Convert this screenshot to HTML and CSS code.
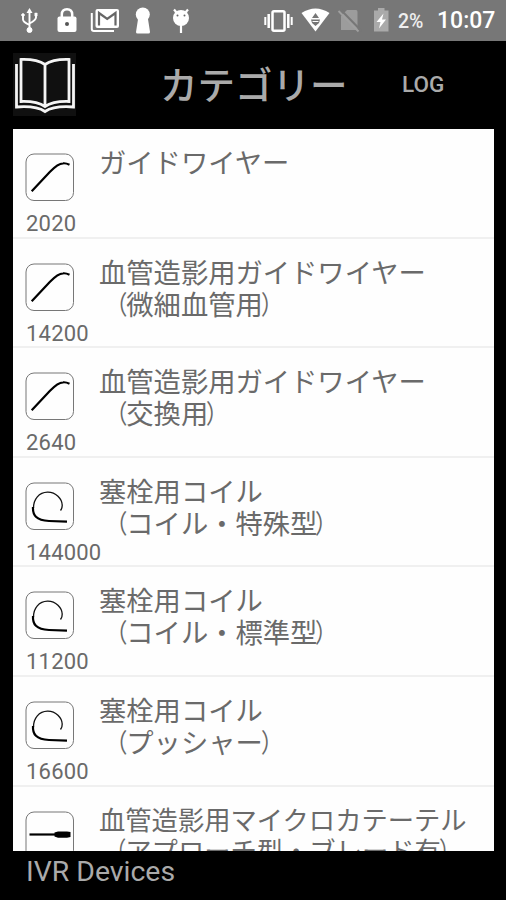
FILE: index.html
```html
<!DOCTYPE html>
<html lang="ja">
<head>
<meta charset="utf-8">
<title>IVR Devices</title>
<link rel="stylesheet" href="styles.css">
</head>
<body>
<svg class="defs" aria-hidden="true">
  <symbol id="wire" viewBox="0 0 50 50">
    <rect class="frame" x="1" y="1" width="47.5" height="46.5" rx="8"/>
    <path class="wire" d="M6.700 38.300 25 18.700Q33 10.500 38 10.300Q41 10 44.500 11.700"/>
  </symbol>
  <symbol id="coil" viewBox="0 0 50 50">
    <rect class="frame" x="1" y="1" width="47.5" height="46.5" rx="8"/>
    <path class="loop" d="M8.500 26C8.500 17 14 10.500 22.500 10.200C31 10 37 17 37.200 23Q37.400 26 35.500 28.500"/>
    <path class="wire" d="M8 25C7.500 33 11 38.500 24 39L42 39.700"/>
  </symbol>
  <symbol id="catheter" viewBox="0 0 50 50">
    <rect class="frame" x="1" y="1" width="47.5" height="46.5" rx="8"/>
    <path class="wire" d="M4.500 23.500H31"/>
    <path d="M29.500 21.500 33 20.500H42L45.500 21V26L42 26.800H33L29.500 25.500Z"/>
  </symbol>
</svg>
<header class="status">
  <svg width="46" height="41" viewBox="0 0 46 41" fill="#fff" stroke="#fff"><path d="M29.500 12V30M23 15V19.500Q23 22 29.500 25M36 15V17.500Q36 20 29.500 23.500" fill="none" stroke-width="1.900"/><path d="M29.500 8 32.500 13H26.500Z" stroke="none"/><circle cx="29.500" cy="30" r="2.500"/><circle cx="23" cy="15" r="1.300"/><path d="M34.800 13H37.200V16H34.800Z" stroke-width=".5"/></svg>
  <svg width="38" height="41" viewBox="46 0 38 41"><path d="M61.800 18V14.500Q61.800 9.200 67 9.200T72.200 14.500V18" fill="none" stroke="#fff" stroke-width="2.500"/><rect x="57.500" y="16.500" width="19" height="15.500" rx="2" fill="#fff"/><circle cx="67" cy="24" r="2" fill="#555"/></svg>
  <svg width="42" height="41" viewBox="84 0 42 41" fill="none"><path d="M91.800 13V29Q91.800 31 94 31H114" stroke="#fff" stroke-width="2"/><rect x="95.500" y="9" width="23.500" height="19" rx="2" fill="#fff"/><path d="M99 25.500V13L107.200 19 115.500 13V25.500" stroke="#666" stroke-width="2.200"/></svg>
  <svg width="36" height="41" viewBox="126 0 36 41" fill="#fff"><circle cx="142.800" cy="14.500" r="7"/><path d="M138.500 16H147.500L150 32Q150 33.500 148.500 33.500H137.500Q136 33.500 136 32Z"/></svg>
  <svg width="94" height="41" viewBox="162 0 94 41" fill="#fff"><circle cx="181" cy="18" r="8"/><path d="M174 9.500 177 13M188 9.500 185 13M181 25V33" stroke="#fff" stroke-width="2.200"/><circle cx="177.500" cy="15.500" r="1" fill="#666"/><circle cx="184.500" cy="15.500" r="1" fill="#666"/></svg>
  <svg width="42" height="41" viewBox="256 0 42 41" fill="none" stroke="#fff"><rect x="272.500" y="11.200" width="12" height="19.500" rx="1.500" stroke-width="2.500"/><path d="M268.700 14V28M288.300 14V28" stroke-width="2.500"/><path d="M265.300 17V25M291.700 17V25" stroke-width="2"/></svg>
  <svg width="36" height="41" viewBox="298 0 36 41"><path d="M301.500 13Q315.500 4 329.500 13L315.500 31.500Z" fill="#fff"/><path d="M315.500 13 319 18H312ZM311 19.500H320L319 23 315.500 26 312 23Z" fill="#777"/><path d="M312.500 21.500H318.500" stroke="#fff"/></svg>
  <svg width="32" height="41" viewBox="334 0 32 41"><path d="M347 10H356Q357.500 10 357.500 12V30H341V16Z" fill="#9c9c9c"/><path d="M341 10 361.500 31" stroke="#777" stroke-width="2"/><path d="M338.500 11 358.500 31.500" stroke="#a0a0a0" stroke-width="1.800"/></svg>
  <svg width="28" height="41" viewBox="366 0 28 41"><path d="M374 10.500H378V8H384.500V10.500H388.500V31.500H374Z" fill="#aaa"/><path d="M383.500 13.500 376.500 22H380.500L379 28.500 386 19.500H382Z" fill="#fff"/></svg>
  <span class="percent">2%</span><span class="clock">10:07</span>
</header>
<div class="bar">
  <svg class="book" viewBox="0 0 63 63"><path d="M8 6.500Q24 6 32 11.500Q40 6 56 6.500V48.500Q40 48 32 53.500Q24 48 8 48.500ZM32 11.500V53"/><path d="M3.500 11V54Q23 52.500 32 58.500Q41 52.500 60.500 54V11" /></svg>
  <h1>カテゴリー</h1>
  <span class="log">LOG</span>
</div>
<main class="list">
  <section class="row"><div class="side"><svg><use href="#wire"/></svg><span>2020</span></div><p>ガイドワイヤー</p></section>
  <section class="row"><div class="side"><svg><use href="#wire"/></svg><span>14200</span></div><p>血管造影用ガイドワイヤー<br><i class="open">（</i>微細血管用<i class="close">）</i></p></section>
  <section class="row"><div class="side"><svg><use href="#wire"/></svg><span>2640</span></div><p>血管造影用ガイドワイヤー<br><i class="open">（</i>交換用<i class="close">）</i></p></section>
  <section class="row"><div class="side"><svg><use href="#coil"/></svg><span>144000</span></div><p>塞栓用コイル<br><i class="open">（</i>コイル・特殊型<i class="close">）</i></p></section>
  <section class="row"><div class="side"><svg><use href="#coil"/></svg><span>11200</span></div><p>塞栓用コイル<br><i class="open">（</i>コイル・標準型<i class="close">）</i></p></section>
  <section class="row"><div class="side"><svg><use href="#coil"/></svg><span>16600</span></div><p>塞栓用コイル<br><i class="open">（</i>プッシャー<i class="close">）</i></p></section>
  <section class="row"><div class="side"><svg><use href="#catheter"/></svg></div><p class="fit">血管造影用マイクロカテーテル<br><i class="open">（</i>アプローチ型・ブレード有<i class="close">）</i></p></section>
</main>
<footer>IVR Devices</footer>
</body>
</html>
```
FILE: styles.css
```css
* { box-sizing: border-box; }
body {
  margin: 0;
  height: 900px;
  display: flex;
  flex-direction: column;
  overflow: hidden;
  background: #000;
  font-family: Roboto, "Noto Sans CJK JP", sans-serif;
}
.defs { position: absolute; width: 0; height: 0; }
.status {
  display: flex;
  flex: none;
  height: 41px;
  background: #777;
  color: #fff;
  line-height: 41px;
  white-space: nowrap;
}
.status svg { flex: none; }
.percent { width: 43px; padding-left: 4px; font-size: 19.5px; font-weight: 500; line-height: 43px; color: #eee; }
.clock { font-size: 23px; font-weight: 500; line-height: 42px; }
.bar {
  flex: none;
  display: flex;
  height: 88px;
  color: #aaa;
}
.book {
  width: 63px;
  height: 63px;
  margin: 12px 0 0 13px;
  background: #101010;
  fill: none;
  stroke: #f4f4f4;
  stroke-width: 2.8;
}
h1 {
  width: 242px;
  margin: 0 0 0 84px;
  font-size: 37.5px;
  font-weight: 500;
  line-height: 91px;
}
.log { font-size: 22.5px; font-weight: 500; line-height: 87px; }
.list {
  flex: none;
  height: 722px;
  margin: 0 12px 0 13px;
  overflow: hidden;
  background: #fefefe;
  color: #6a6a6a;
}
.row {
  display: flex;
  height: 109.6px;
  border-bottom: 2px solid #f0f0f0;
}
.side { width: 86px; padding: 24px 0 0 12px; }
.side svg { display: block; width: 50px; height: 50px; }
.side span {
  display: block;
  margin-left: 1px;
  font-size: 22px;
  line-height: 24px;
  letter-spacing: .2px;
  padding-top: 9px;
}
.row p {
  margin: 16px 0 0;
  font-size: 27.3px;
  line-height: 32px;
  white-space: nowrap;
  font-family: "Noto Sans CJK JP", sans-serif;
}
.row .fit { font-size: 26.3px; line-height: 31px; }
.row i { display: inline-block; font-style: normal; line-height: 1; }
.open { transform: translateX(1px) scale(.8, .95); transform-origin: 100% 50%; }
.close { transform: translateX(-2px) scale(.8, .95); transform-origin: 0 50%; }
.frame { fill: none; stroke: #777; stroke-width: 1; }
.wire { fill: none; stroke: #000; stroke-width: 2.2; }
.loop { fill: none; stroke: #111; stroke-width: 1.3; }
footer {
  padding-left: 26px;
  color: #aaa;
  font-size: 28.4px;
  line-height: 41px;
}
```
